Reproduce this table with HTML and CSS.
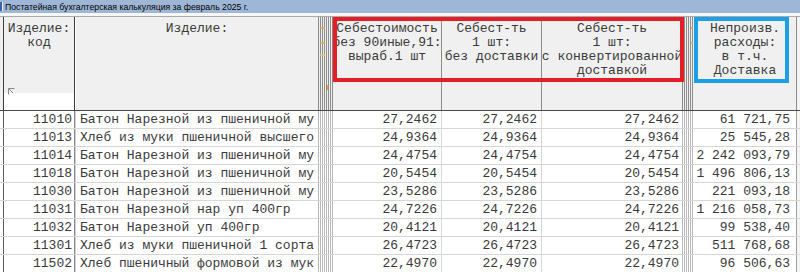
FILE: index.html
```html
<!DOCTYPE html>
<html lang="ru">
<head>
<meta charset="utf-8">
<title>Калькуляция</title>
<link rel="stylesheet" href="styles.css">
</head>
<body>
<div class="window">
  <div class="titlebar"><span class="ticon"></span><span class="ttl">Постатейная бухгалтерская калькуляция за февраль 2025 г.</span></div>
  <div class="strip"></div>
  <div class="grid">
    <div class="row head">
      <div class="c c0"></div>
      <div class="c c1"><div class="ht">Изделие:<br>код</div><svg class="corner" width="7" height="7" viewBox="0 0 7 7"><path d="M0.5 6.5V0.5H6.5M0.5 0.5L5 5" fill="none" stroke="#8a8a8a" stroke-width="1"/></svg></div>
      <div class="c c2"><div class="ht">Изделие:</div></div>
      <div class="c g1"><i class="m m1"></i><i class="m m2"></i><i class="m m3"></i><i class="m m4"></i></div>
      <div class="c c3"><div class="ht">Себестоимость<br>без 90иные,91:<br>выраб.1 шт</div></div>
      <div class="c c4"><div class="ht">Себест-ть<br>1 шт:<br>без доставки</div></div>
      <div class="c c5"><div class="ht">Себест-ть<br>1 шт:<br>с конвертированной<br>доставкой</div></div>
      <div class="c g2"><i class="m n1"></i><i class="m n2"></i></div>
      <div class="c c6"><div class="ht">Непроизв.<br>расходы:<br>в т.ч.<br>Доставка</div></div>
      <div class="c c7"></div>
    </div>

    <div class="row"><div class="c c0"></div><div class="c c1">11010</div><div class="c c2">Батон Нарезной из пшеничной му</div><div class="c g1"></div><div class="c c3">27,2462</div><div class="c c4">27,2462</div><div class="c c5">27,2462</div><div class="c g2"></div><div class="c c6">61 721,75</div><div class="c c7"></div></div>
    <div class="row"><div class="c c0"></div><div class="c c1">11013</div><div class="c c2">Хлеб из муки пшеничной высшего</div><div class="c g1"></div><div class="c c3">24,9364</div><div class="c c4">24,9364</div><div class="c c5">24,9364</div><div class="c g2"></div><div class="c c6">25 545,28</div><div class="c c7"></div></div>
    <div class="row"><div class="c c0"></div><div class="c c1">11014</div><div class="c c2">Батон Нарезной из пшеничной му</div><div class="c g1"></div><div class="c c3">24,4754</div><div class="c c4">24,4754</div><div class="c c5">24,4754</div><div class="c g2"></div><div class="c c6">2 242 093,79</div><div class="c c7"></div></div>
    <div class="row"><div class="c c0"></div><div class="c c1">11018</div><div class="c c2">Батон Нарезной из пшеничной му</div><div class="c g1"></div><div class="c c3">20,5454</div><div class="c c4">20,5454</div><div class="c c5">20,5454</div><div class="c g2"></div><div class="c c6">1 496 806,13</div><div class="c c7"></div></div>
    <div class="row"><div class="c c0"></div><div class="c c1">11030</div><div class="c c2">Батон Нарезной из пшеничной му</div><div class="c g1"></div><div class="c c3">23,5286</div><div class="c c4">23,5286</div><div class="c c5">23,5286</div><div class="c g2"></div><div class="c c6">221 093,18</div><div class="c c7"></div></div>
    <div class="row"><div class="c c0"></div><div class="c c1">11031</div><div class="c c2">Батон Нарезной нар уп 400гр</div><div class="c g1"></div><div class="c c3">24,7226</div><div class="c c4">24,7226</div><div class="c c5">24,7226</div><div class="c g2"></div><div class="c c6">1 216 058,73</div><div class="c c7"></div></div>
    <div class="row"><div class="c c0"></div><div class="c c1">11032</div><div class="c c2">Батон Нарезной уп 400гр</div><div class="c g1"></div><div class="c c3">20,4121</div><div class="c c4">20,4121</div><div class="c c5">20,4121</div><div class="c g2"></div><div class="c c6">99 538,40</div><div class="c c7"></div></div>
    <div class="row"><div class="c c0"></div><div class="c c1">11301</div><div class="c c2">Хлеб из муки пшеничной 1 сорта</div><div class="c g1"></div><div class="c c3">26,4723</div><div class="c c4">26,4723</div><div class="c c5">26,4723</div><div class="c g2"></div><div class="c c6">511 768,68</div><div class="c c7"></div></div>
    <div class="row"><div class="c c0"></div><div class="c c1">11502</div><div class="c c2">Хлеб пшеничный формовой из мук</div><div class="c g1"></div><div class="c c3">22,4970</div><div class="c c4">22,4970</div><div class="c c5">22,4970</div><div class="c g2"></div><div class="c c6">96 506,63</div><div class="c c7"></div></div>
  </div>
  <div class="mark red"></div>
  <div class="mark blue"></div>
</div>
</body>
</html>
```
FILE: styles.css
```css
* { box-sizing: border-box; }
html, body { margin: 0; padding: 0; background: #ffffff; }
body { width: 800px; height: 272px; overflow: hidden; }

.window { position: relative; width: 800px; height: 272px; overflow: hidden; }

.titlebar {
  height: 13px;
  background: #9fb7d6;
  display: flex;
  align-items: center;
  font-family: "Liberation Sans", Arial, sans-serif;
  font-size: 8.7px;
  color: #000;
  white-space: nowrap;
}
.ticon { width: 3px; height: 9px; background: #3a64b0; border-right: 1px solid #e8eef8; margin-right: 2px; }
.ttl { letter-spacing: 0; }

.strip { height: 4px; background: #f6f7f9; border-bottom: 1px solid #a9a9a9; }

.grid {
  font-family: "Liberation Mono", "Courier New", monospace;
  font-size: 13px;
  color: #3a3a3a;
}

.row {
  display: grid;
  grid-template-columns: 4px 71px 243px 15px 109px 100px 140px 12px 103px 3px;
  height: 18px;
  border-bottom: 1px solid #d6d6d6;
}
.row.head {
  height: 94px;
  background: #f0f0f0;
  border-bottom: 1px solid #4a4a4a;
}

.c { overflow: hidden; white-space: nowrap; line-height: 17px; }
.c0 { border-right: 1px solid #5a5a5a; }
.c1 { border-right: 1px solid #8a8a8a; text-align: right; padding-right: 2px; }
.c2 { border-left: 1px solid #d0d0d0; padding-left: 4px; }
.g1, .g2 { background: repeating-linear-gradient(to right, #b8b8b8 0 1px, #ffffff 1px 2px); }
.c3 { border-right: 1px solid #d6d6d6; text-align: right; padding-right: 4px; }
.c4 { border-right: 1px solid #d6d6d6; text-align: right; padding-right: 4px; }
.c5 { text-align: right; padding-right: 3px; }
.c6 { border-right: 1px solid #a0a0a0; text-align: right; padding-right: 6px; }
.c7 { background: #f4f4f4; }

.head .c { line-height: 14px; text-align: center; padding: 5px 0 0 0; position: relative; }
.head .c0 { border-right: 1px solid #3c3c3c; }
.head .c1 { border-right: 1px solid #3c3c3c; background: linear-gradient(#f0f0f0 0 76px, #ffffff 76px); }
.head .c2 { border-left: 1px solid #ffffff; }
.head .g1, .head .g2 { background: repeating-linear-gradient(to right, #8c8c8c 0 1px, #f0f0f0 1px 2px); }
.head .c3, .head .c4 { border-right: 1px solid #8c8c8c; }
.head .c6 { border-right: 1px solid #8c8c8c; }
.head .c7 { background: #f4f4f4; }
.ht { display: flex; flex-direction: column; align-items: center; }
.head .c3 .ht, .head .c5 .ht { margin: 0 -6px; }

.corner { position: absolute; left: 4px; top: 71px; }

.m { position: absolute; display: block; width: 5px; height: 2px; background: #d9a640; opacity: .7; }
.m1 { left: 2px; top: 10px; }
.m2 { left: 2px; top: 25px; }
.m3 { left: 2px; top: 37px; background: #e0c860; }
.m4 { left: 8px; top: 68px; width: 2px; height: 5px; background: #d08020; }
.n1 { left: 9px; top: 10px; width: 2px; }
.n2 { left: 9px; top: 25px; width: 2px; }

.mark { position: absolute; pointer-events: none; }
.red { left: 333px; top: 17px; width: 351px; height: 65px; border: 4px solid #e41e26; }
.blue { left: 694px; top: 17px; width: 95px; height: 66px; border: 4px solid #1aa0e6; }
```
